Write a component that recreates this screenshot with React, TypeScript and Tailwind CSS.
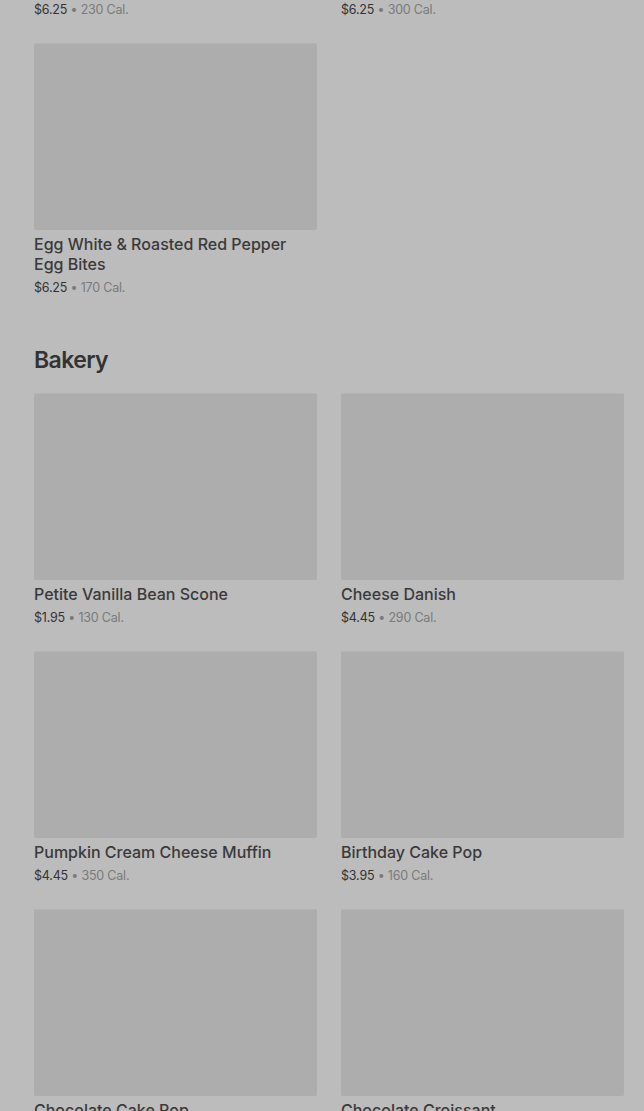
import React from "react";

type Item = { name: string; price: string; cal: string };

const prevRow: Item[] = [
  { name: "Bacon & Gruyère Egg Bites", price: "$6.25", cal: "230 Cal." },
  { name: "Kale & Mushroom Egg Bites", price: "$6.25", cal: "300 Cal." },
];

const breakfast: Item[] = [
  { name: "Egg White & Roasted Red Pepper Egg Bites", price: "$6.25", cal: "170 Cal." },
];

const bakery: Item[] = [
  { name: "Petite Vanilla Bean Scone", price: "$1.95", cal: "130 Cal." },
  { name: "Cheese Danish", price: "$4.45", cal: "290 Cal." },
  { name: "Pumpkin Cream Cheese Muffin", price: "$4.45", cal: "350 Cal." },
  { name: "Birthday Cake Pop", price: "$3.95", cal: "160 Cal." },
  { name: "Chocolate Cake Pop", price: "$3.95", cal: "160 Cal." },
  { name: "Chocolate Croissant", price: "$4.25", cal: "300 Cal." },
];

function ProductCard({ item }: { item: Item }) {
  return (
    <div className="flex flex-col">
      <div className="h-[187px] w-full rounded-[2px] bg-[#adadad] shadow-[inset_0_1px_0_#b4b4b4]" />
      <div className="mt-1 text-[16px] font-medium leading-5 text-[#3a3a3a]">{item.name}</div>
      <div className="mt-[5px] text-[12.5px] leading-[18px] tracking-[-0.2px]">
        <span className="text-[#333]">{item.price}</span>
        <span className="text-[#7a7a7a]"> • {item.cal}</span>
      </div>
    </div>
  );
}

function Grid({ items }: { items: Item[] }) {
  return (
    <div className="grid grid-cols-2 gap-x-6 gap-y-6">
      {items.map((it) => (
        <ProductCard key={it.name} item={it} />
      ))}
    </div>
  );
}

export default function App() {
  return (
    <div className="h-[1111px] overflow-hidden bg-[#bcbcbc] font-['Inter',sans-serif]">
      <div className="-mt-[215px] pl-[34px] pr-5">
        <div className="space-y-6">
          <Grid items={prevRow} />
          <Grid items={breakfast} />
        </div>

        <h2 className="mt-[48px] mb-[18px] text-[23px] font-semibold leading-[30px] tracking-[-0.6px] text-[#333]">
          Bakery
        </h2>
        <Grid items={bakery} />
      </div>
    </div>
  );
}
